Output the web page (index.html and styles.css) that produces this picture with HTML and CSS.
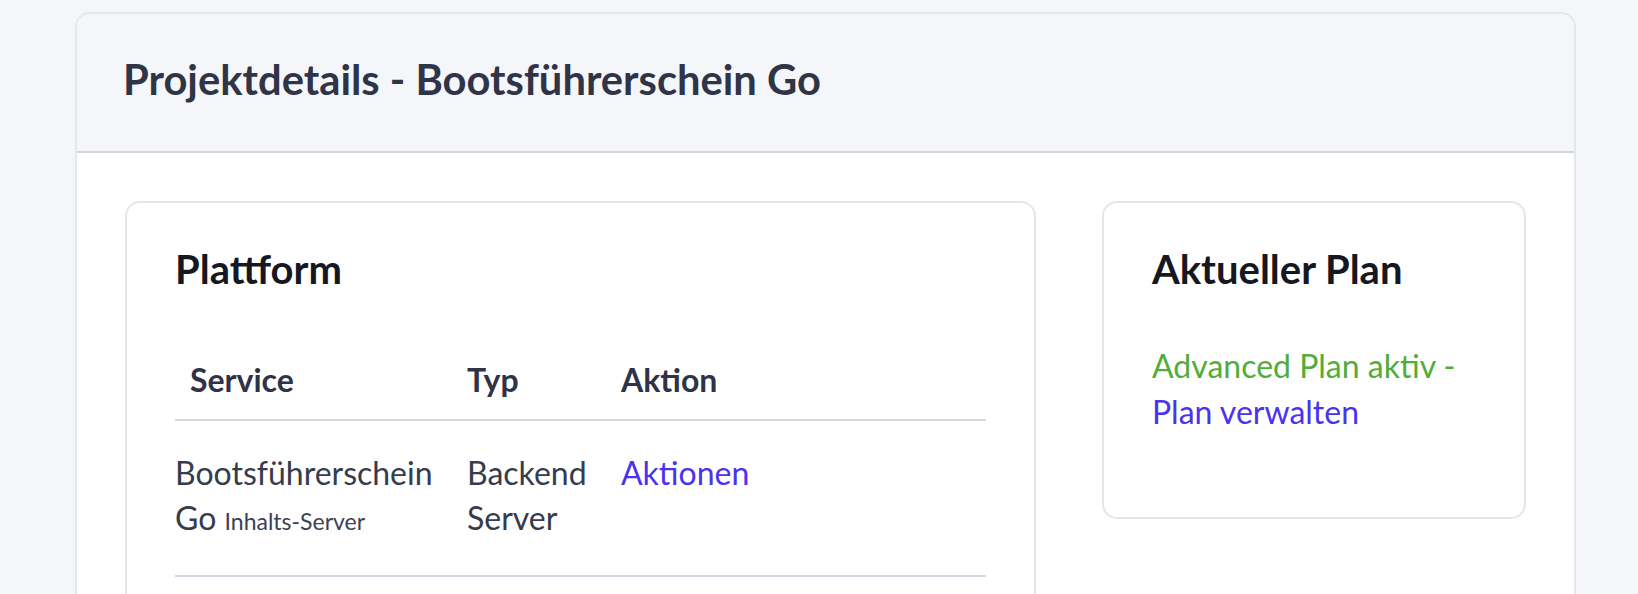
FILE: index.html
```html
<!DOCTYPE html>
<html lang="de">
<head>
<meta charset="utf-8">
<title>Projektdetails - Bootsführerschein Go</title>
<link rel="stylesheet" href="styles.css">
</head>
<body>
<div class="page">
  <section class="panel">
    <header class="panel-header">
      <h1 class="panel-title">Projektdetails - Bootsführerschein Go</h1>
    </header>
    <div class="panel-body">
      <div class="grid">
        <div class="card">
          <h2 class="card-title">Plattform</h2>
          <table class="table">
            <thead>
              <tr>
                <th class="col-service">Service</th>
                <th class="col-type">Typ</th>
                <th class="col-action">Aktion</th>
              </tr>
            </thead>
            <tbody>
              <tr>
                <td class="col-service">Bootsführerschein Go <small class="sub">Inhalts-Server</small></td>
                <td class="col-type">Backend Server</td>
                <td class="col-action"><a class="link" href="#">Aktionen</a></td>
              </tr>
            </tbody>
          </table>
        </div>
        <div class="card card-plan">
          <h2 class="card-title card-title-plan">Aktueller Plan</h2>
          <p class="plan-text"><span class="ok">Advanced Plan aktiv -</span> <a class="link" href="#">Plan verwalten</a></p>
        </div>
      </div>
    </div>
  </section>
</div>
</body>
</html>
```
FILE: styles.css
```css
html, body {
  margin: 0;
  padding: 0;
  background: #f5f6fa;
  font-family: "Lato", "Open Sans", sans-serif;
  color: #363b4e;
}

.page {
  padding: 12px 62px 0 75px;
}

.panel {
  border: 2px solid #e5e7ee;
  border-bottom: none;
  border-radius: 15px 15px 0 0;
  background: #fff;
  overflow: hidden;
}

.panel-header {
  background: #f5f6fa;
  border-bottom: 2px solid #d3d6e1;
  padding: 40px 46px 47px;
}

.panel-title {
  margin: 0;
  font-size: 41.7px;
  line-height: 50px;
  font-weight: 700;
  color: #2f3447;
}

.panel-body {
  padding: 48px 48px 40px;
}

.grid {
  display: grid;
  grid-template-columns: minmax(0, 911fr) minmax(0, 424fr);
  column-gap: 66px;
  align-items: start;
}

.card {
  border: 2px solid #e4e6ed;
  border-radius: 15px;
  padding: 42px 48px 48px;
  background: #fff;
}

.card-title {
  margin: 0 0 48px;
  font-size: 40px;
  line-height: 1.2;
  font-weight: 700;
  color: #151823;
}

.card-title-plan {
  margin-bottom: 50px;
}

.table {
  width: 100%;
  border-collapse: collapse;
  font-size: 32px;
  line-height: 45.6px;
}

.table th {
  text-align: left;
  font-weight: 700;
  color: #2e3346;
  padding: 16px 0;
  border-bottom: 2px solid #d5d9e2;
}

.table td {
  vertical-align: top;
  padding: 29px 0 34px;
  border-bottom: 2px solid #d5d9e2;
}

.table th.col-service {
  padding-left: 15px;
}

.col-service {
  width: 292px;
  padding-right: 16px;
  box-sizing: border-box;
}

.col-type {
  width: 154px;
}

.sub {
  font-size: 23px;
  line-height: 1;
  color: #3c4154;
}

.link {
  color: #4b32f0;
  text-decoration: none;
}

.plan-text {
  margin: 0 0 35px;
  font-size: 32px;
  line-height: 45.6px;
}

.ok {
  color: #52ad38;
}
```
